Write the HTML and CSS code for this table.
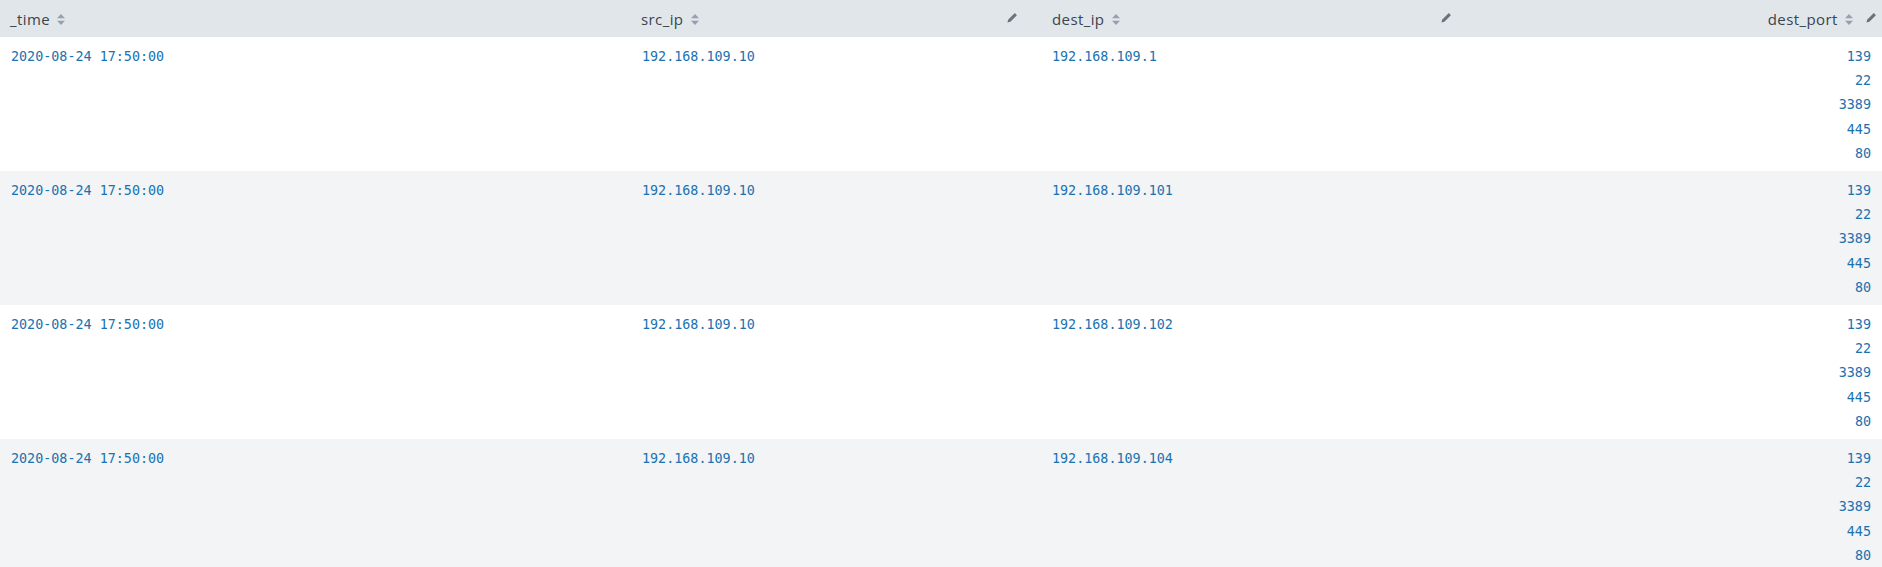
FILE: index.html
```html
<!DOCTYPE html>
<html lang="en">
<head>
    <meta charset="UTF-8">
    <title>Results</title>
    <link rel="stylesheet" href="styles.css">
</head>
<body>
    <table class="results">
        <colgroup>
            <col class="w-time">
            <col class="w-src">
            <col class="w-dest">
            <col class="w-port">
        </colgroup>
        <thead>
            <tr>
                <th>
                    <span class="label">_time</span>
                    <svg class="sort" viewBox="0 0 8 11"><path d="M4 0 L8 4.2 L0 4.2 Z M4 11 L8 6.8 L0 6.8 Z"/></svg>
                </th>
                <th>
                    <span class="label">src_ip</span>
                    <svg class="sort" viewBox="0 0 8 11"><path d="M4 0 L8 4.2 L0 4.2 Z M4 11 L8 6.8 L0 6.8 Z"/></svg>
                    <svg class="pencil" viewBox="0 0 11 11"><path d="M0.4 10.6 L1.3 7.6 L7.8 1.1 L9.9 3.2 L3.4 9.7 Z"/></svg>
                </th>
                <th class="col-dest">
                    <span class="label">dest_ip</span>
                    <svg class="sort" viewBox="0 0 8 11"><path d="M4 0 L8 4.2 L0 4.2 Z M4 11 L8 6.8 L0 6.8 Z"/></svg>
                    <svg class="pencil" viewBox="0 0 11 11"><path d="M0.4 10.6 L1.3 7.6 L7.8 1.1 L9.9 3.2 L3.4 9.7 Z"/></svg>
                </th>
                <th class="num">
                    <span class="label">dest_port</span>
                    <svg class="sort" viewBox="0 0 8 11"><path d="M4 0 L8 4.2 L0 4.2 Z M4 11 L8 6.8 L0 6.8 Z"/></svg>
                    <svg class="pencil" viewBox="0 0 11 11"><path d="M0.4 10.6 L1.3 7.6 L7.8 1.1 L9.9 3.2 L3.4 9.7 Z"/></svg>
                </th>
            </tr>
        </thead>
        <tbody>
            <tr>
                <td>2020-08-24 17:50:00</td>
                <td>192.168.109.10</td>
                <td class="col-dest">192.168.109.1</td>
                <td class="num"><div>139</div><div>22</div><div>3389</div><div>445</div><div>80</div></td>
            </tr>
            <tr>
                <td>2020-08-24 17:50:00</td>
                <td>192.168.109.10</td>
                <td class="col-dest">192.168.109.101</td>
                <td class="num"><div>139</div><div>22</div><div>3389</div><div>445</div><div>80</div></td>
            </tr>
            <tr>
                <td>2020-08-24 17:50:00</td>
                <td>192.168.109.10</td>
                <td class="col-dest">192.168.109.102</td>
                <td class="num"><div>139</div><div>22</div><div>3389</div><div>445</div><div>80</div></td>
            </tr>
            <tr>
                <td>2020-08-24 17:50:00</td>
                <td>192.168.109.10</td>
                <td class="col-dest">192.168.109.104</td>
                <td class="num"><div>139</div><div>22</div><div>3389</div><div>445</div><div>80</div></td>
            </tr>
        </tbody>
    </table>
</body>
</html>
```

FILE: styles.css
```css
/* Reset */
* {
    margin: 0;
    padding: 0;
    box-sizing: border-box;
}

body {
    background-color: #ffffff;
    font-family: 'Open Sans', 'Lato', sans-serif;
    overflow: hidden;
}

/* Results table */
.results {
    width: 1882px;
    border-collapse: collapse;
    table-layout: fixed;
}

.w-time { width: 631px; }
.w-src  { width: 392px; }
.w-dest { width: 434px; }
.w-port { width: 425px; }

.results th {
    position: relative;
    height: 37px;
    padding: 0 10px;
    background-color: #e1e6eb;
    color: #3c444d;
    font-size: 15px;
    font-weight: 400;
    letter-spacing: 0.4px;
    text-align: left;
    white-space: nowrap;
    vertical-align: middle;
}

.results th .label {
    display: inline-block;
    vertical-align: middle;
    line-height: 20px;
}

.sort {
    width: 8px;
    height: 11px;
    margin-left: 3px;
    vertical-align: middle;
    fill: #98a1ab;
}

/* Field format button sits at the right edge of the header */
.pencil {
    position: absolute;
    right: 5px;
    top: 12px;
    width: 11px;
    height: 11px;
    fill: #68737e;
}

.results th.num {
    text-align: right;
    padding-right: 29px;
}

.results td {
    height: 134px;
    padding: 8px 10px 5px 11px;
    color: #1a72b0;
    font-family: 'DejaVu Sans Mono', 'Liberation Mono', monospace;
    font-size: 13.4px;
    line-height: 24.2px;
    vertical-align: top;
    white-space: nowrap;
}

.results .col-dest {
    padding-left: 29px;
}

.results td.num {
    text-align: right;
    padding-right: 11px;
}

.results tbody tr:nth-child(even) td {
    background-color: #f2f4f5;
}
```
